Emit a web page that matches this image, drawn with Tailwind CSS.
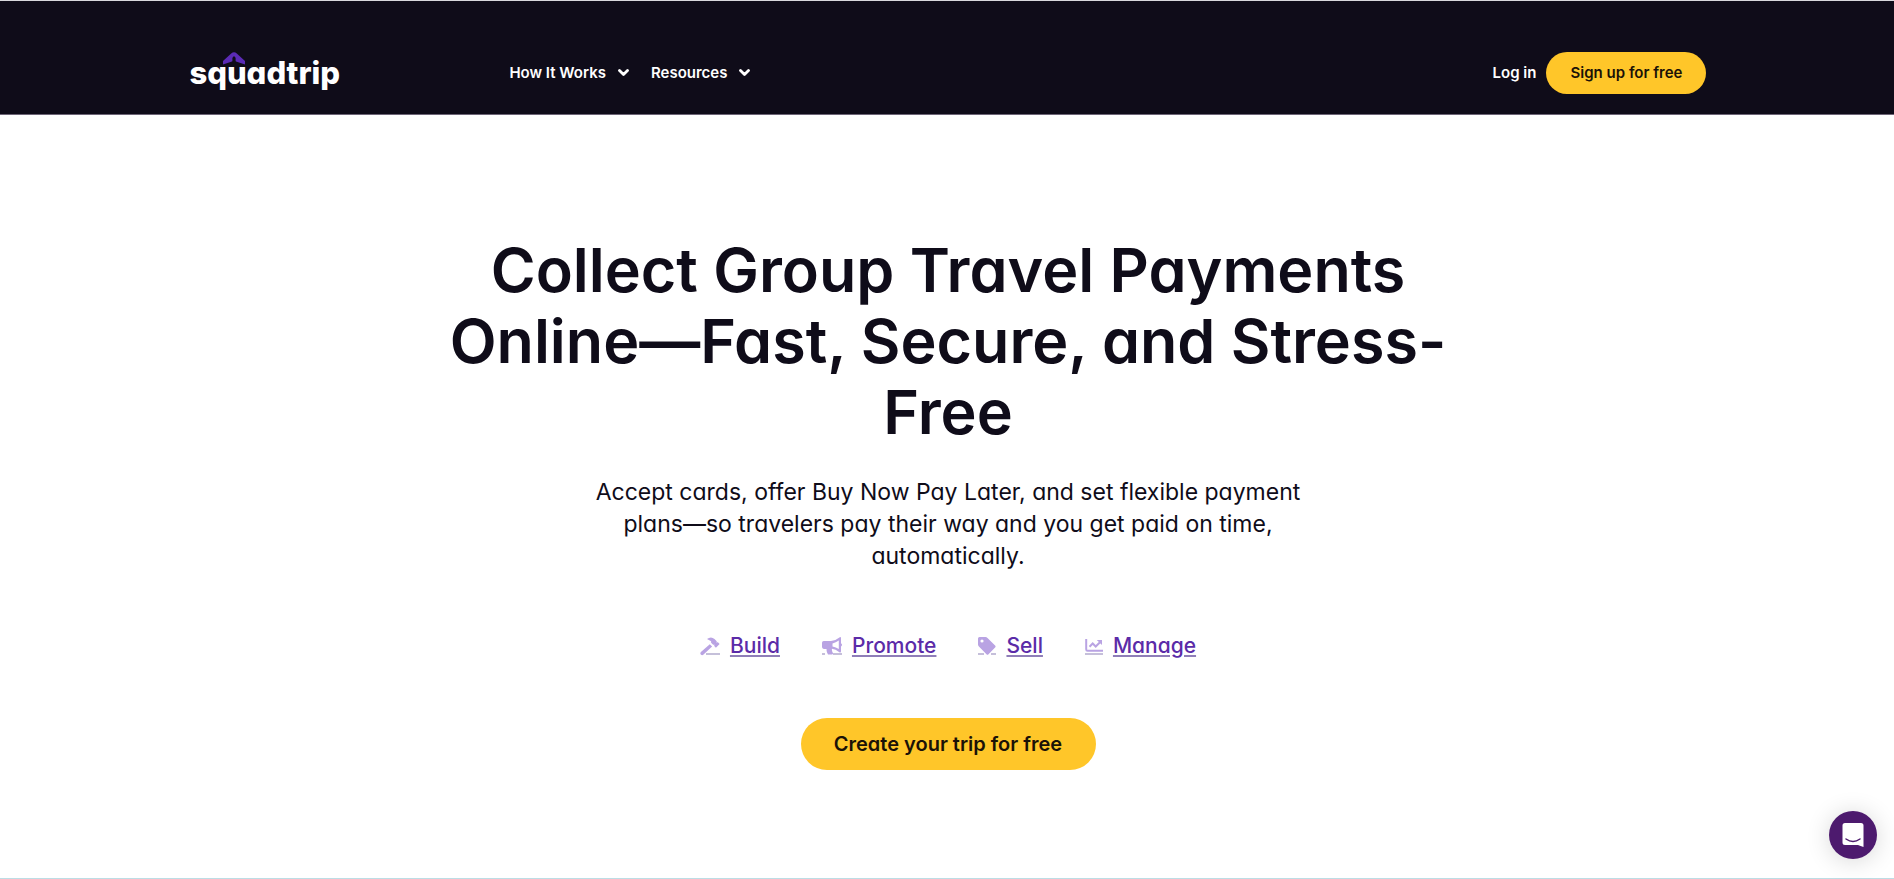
<!DOCTYPE html>
<html lang="en">
<head>
<meta charset="utf-8">
<meta name="viewport" content="width=device-width, initial-scale=1">
<title>SquadTrip</title>
<script src="https://cdn.jsdelivr.net/npm/@tailwindcss/browser@4"></script>
</head>
<body class="flex min-h-screen flex-col border-b border-[#bcdde5] bg-white font-[Inter,sans-serif] text-[#0f0c19] [font-feature-settings:'cv11','calt'_0]">
<header class="border-t border-b border-t-[#d9d9dd] border-b-[#6d6577] bg-[#0f0c19] text-white">
  <div class="ml-[10%] flex h-[113px] w-[80.1%] items-center pt-[30px]">
    <a href="#" aria-label="squadtrip home" class="relative w-80 shrink-0 text-[31px] leading-10 font-extrabold">squadtrip
      <svg class="absolute top-[-1px] left-[34px] h-[13px] w-[22px]" viewBox="0 0 22 13" aria-hidden="true"><path d="M0 12.600V9L8.200 1.400Q11-.9 13.800 1.400L22 9v3.600l-7.500-2.600L11 8.800 7.500 10z" fill="#5b2bb5"/><path d="M9.400 13V6Q11 2.400 12.600 6V13z" fill="#0f0c19"/></svg>
    </a>
    <nav aria-label="Main" class="flex gap-[22px] text-[15px] leading-6 font-semibold">
      <button type="button" class="flex items-center gap-3">How It Works<svg class="h-2 w-[11px]" viewBox="0 0 11 8" fill="none" stroke="currentColor" stroke-width="2.800" stroke-linecap="round" stroke-linejoin="round" aria-hidden="true"><path d="M1.500 1.600l4 4 4-4"/></svg></button>
      <button type="button" class="flex items-center gap-3">Resources<svg class="h-2 w-[11px]" viewBox="0 0 11 8" fill="none" stroke="currentColor" stroke-width="2.800" stroke-linecap="round" stroke-linejoin="round" aria-hidden="true"><path d="M1.500 1.600l4 4 4-4"/></svg></button>
    </nav>
    <div class="ml-auto flex items-center gap-[10px] text-[15px] leading-6 font-semibold">
      <a href="#">Log in</a>
      <a href="#" class="flex h-[42px] w-40 items-center justify-center rounded-full bg-[#ffc629] text-[#1b1207]">Sign up for free</a>
    </div>
  </div>
</header>
<main class="flex flex-1 flex-col items-center pt-[120px] pl-[2px]">
  <h1 class="max-w-[1020px] text-center text-[61px] leading-[71px] font-semibold">Collect Group Travel Payments Online—Fast, Secure, and Stress-Free</h1>
  <p class="mt-7 max-w-[740px] text-center text-[23px] leading-8">Accept cards, offer Buy Now Pay Later, and set flexible payment plans—so travelers pay their way and you get paid on time, automatically.</p>
  <div class="mt-[59px] flex gap-[42px] text-[21px] leading-[30px] font-medium text-[#5b2ba8]">
    <a href="#" class="flex items-center gap-[10px]"><svg class="h-5 w-5" viewBox="0 0 20 20" fill="#b9a3e3" aria-hidden="true"><path d="M7 3Q11-.1 14.500 3l2.200 2.200v1.700l1-.8 1.900 1.900-3.700 3.700-1.900-1.900.8-1h-1.700l-2-2.100V5.200zM9.800 8.200l2.300 2.300-8.800 8.300Q2 19.700.8 18.600q-1-1.300.1-2.500z"/><path d="M6 17.500h14v1H6z" fill="#8b80b5"/></svg><span class="underline decoration-[#8f7eb8] decoration-2 underline-offset-2">Build</span></a>
    <a href="#" class="flex items-center gap-[10px]"><svg class="h-5 w-5" viewBox="0 0 20 20" fill="#b9a3e3" aria-hidden="true"><path fill-rule="evenodd" d="M1.800 5H9q4.300 0 8-3.200Q19-.1 19 2v5.200q1 .5 1 1.600t-1 1.600v4.800q0 2.300-2 .8-3.300-2.800-7-3.200-.5 2 .9 4.200.5 1.500-1.200 1.500H6q-1.800-2.500-1.400-5.600H1.800Q0 12.800 0 11V6.800Q0 5 1.800 5zm15-.4q-3 2.300-6.300 2.800v3q3.500.5 6.300 2.600z"/><path d="M0 17.500h3v1H0zm11 0h9v1h-9z" fill="#8b80b5"/></svg><span class="underline decoration-[#8f7eb8] decoration-2 underline-offset-2">Promote</span></a>
    <a href="#" class="flex items-center gap-[10px]"><svg class="h-5 w-[18px]" viewBox="0 0 18 20" fill="#b9a3e3" aria-hidden="true"><path fill-rule="evenodd" d="M0 2.500Q0 1 1.500 1h6q1.100 0 2 .9l7.600 7.600q1 1 0 2l-6.600 6.700q-1 1-2 0L.9 10.600Q0 9.700 0 8.500zM4 3.400a1.600 1.600 0 1 0 0 3.200 1.600 1.600 0 1 0 0-3.200z"/><path d="M0 17.500h6v1H0zm13 0h5v1h-5z" fill="#8b80b5"/></svg><span class="underline decoration-[#8f7eb8] decoration-2 underline-offset-2">Sell</span></a>
    <a href="#" class="flex items-center gap-[10px]"><svg class="h-5 w-[18px]" viewBox="0 0 18 20" fill="none" stroke="#b9a3e3" stroke-width="2" aria-hidden="true"><path d="M1.200 3v10.200q0 1.500 1.300 1.500H18M4.500 10.800l3.200-3.300 3 3 4.300-4.300"/><path d="M11.800 4H17v5z" fill="#b9a3e3" stroke="none"/><path d="M0 18h18" stroke="#8b80b5" stroke-width="1"/></svg><span class="underline decoration-[#8f7eb8] decoration-2 underline-offset-2">Manage</span></a>
  </div>
  <a href="#" class="mt-[57px] flex h-[52px] w-[295px] items-center justify-center rounded-full bg-[#ffc629] text-[20px] leading-[30px] font-semibold text-[#1b1207]">Create your trip for free</a>
</main>
<button type="button" aria-label="Open chat" class="fixed right-[17px] bottom-5 flex size-12 items-center justify-center rounded-full bg-[#4d1a6e] shadow-[0_2px_24px_rgba(0,0,0,0.16)]">
  <svg class="h-6 w-[22px]" viewBox="0 0 22 24" aria-hidden="true"><path d="M3 0h16q2.500 0 2.500 2.500V24q-3-1-5.500-2H3Q.5 22 .5 19.500v-17Q.5 0 3 0z" fill="#fff"/><path d="M4 16q7 5 14 0" fill="none" stroke="#4d1a6e" stroke-width="1.500" stroke-linecap="round"/></svg>
</button>
</body>
</html>
